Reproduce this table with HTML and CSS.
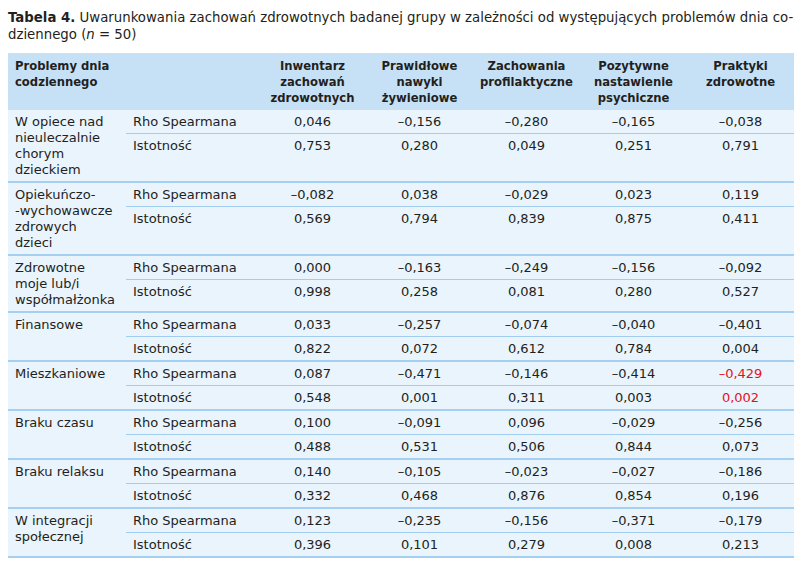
FILE: index.html
```html
<!DOCTYPE html>
<html lang="pl">
<head>
<meta charset="utf-8">
<title>Tabela 4</title>
<link rel="stylesheet" href="styles.css">
</head>
<body>
<div class="page">
  <p class="caption"><b>Tabela 4.</b> Uwarunkowania zachowań zdrowotnych badanej grupy w zależności od występujących problemów dnia co-<br>dziennego (<i>n</i> = 50)</p>
  <div class="table">
    <div class="head">
      <div class="h h-left">Problemy dnia<br>codziennego</div>
      <div class="h">Inwentarz<br>zachowań<br>zdrowotnych</div>
      <div class="h">Prawidłowe<br>nawyki<br>żywieniowe</div>
      <div class="h">Zachowania<br>profilaktyczne</div>
      <div class="h">Pozytywne<br>nastawienie<br>psychiczne</div>
      <div class="h">Praktyki<br>zdrowotne</div>
    </div>

    <div class="group">
      <div class="prob">W opiece nad<br>nieuleczalnie<br>chorym<br>dzieckiem</div>
      <div class="c stat r1">Rho Spearmana</div><div class="c r1">0,046</div><div class="c r1">–0,156</div><div class="c r1">–0,280</div><div class="c r1">–0,165</div><div class="c r1">–0,038</div>
      <div class="c stat">Istotność</div><div class="c">0,753</div><div class="c">0,280</div><div class="c">0,049</div><div class="c">0,251</div><div class="c">0,791</div>
    </div>

    <div class="group">
      <div class="prob">Opiekuńczo-<br>-wychowawcze<br>zdrowych<br>dzieci</div>
      <div class="c stat r1">Rho Spearmana</div><div class="c r1">–0,082</div><div class="c r1">0,038</div><div class="c r1">–0,029</div><div class="c r1">0,023</div><div class="c r1">0,119</div>
      <div class="c stat">Istotność</div><div class="c">0,569</div><div class="c">0,794</div><div class="c">0,839</div><div class="c">0,875</div><div class="c">0,411</div>
    </div>

    <div class="group">
      <div class="prob">Zdrowotne<br>moje lub/i<br>współmałżonka</div>
      <div class="c stat r1">Rho Spearmana</div><div class="c r1">0,000</div><div class="c r1">–0,163</div><div class="c r1">–0,249</div><div class="c r1">–0,156</div><div class="c r1">–0,092</div>
      <div class="c stat">Istotność</div><div class="c">0,998</div><div class="c">0,258</div><div class="c">0,081</div><div class="c">0,280</div><div class="c">0,527</div>
    </div>

    <div class="group">
      <div class="prob">Finansowe</div>
      <div class="c stat r1">Rho Spearmana</div><div class="c r1">0,033</div><div class="c r1">–0,257</div><div class="c r1">–0,074</div><div class="c r1">–0,040</div><div class="c r1">–0,401</div>
      <div class="c stat">Istotność</div><div class="c">0,822</div><div class="c">0,072</div><div class="c">0,612</div><div class="c">0,784</div><div class="c">0,004</div>
    </div>

    <div class="group">
      <div class="prob">Mieszkaniowe</div>
      <div class="c stat r1">Rho Spearmana</div><div class="c r1">0,087</div><div class="c r1">–0,471</div><div class="c r1">–0,146</div><div class="c r1">–0,414</div><div class="c r1 sig">–0,429</div>
      <div class="c stat">Istotność</div><div class="c">0,548</div><div class="c">0,001</div><div class="c">0,311</div><div class="c">0,003</div><div class="c sig">0,002</div>
    </div>

    <div class="group">
      <div class="prob">Braku czasu</div>
      <div class="c stat r1">Rho Spearmana</div><div class="c r1">0,100</div><div class="c r1">–0,091</div><div class="c r1">0,096</div><div class="c r1">–0,029</div><div class="c r1">–0,256</div>
      <div class="c stat">Istotność</div><div class="c">0,488</div><div class="c">0,531</div><div class="c">0,506</div><div class="c">0,844</div><div class="c">0,073</div>
    </div>

    <div class="group">
      <div class="prob">Braku relaksu</div>
      <div class="c stat r1">Rho Spearmana</div><div class="c r1">0,140</div><div class="c r1">–0,105</div><div class="c r1">–0,023</div><div class="c r1">–0,027</div><div class="c r1">–0,186</div>
      <div class="c stat">Istotność</div><div class="c">0,332</div><div class="c">0,468</div><div class="c">0,876</div><div class="c">0,854</div><div class="c">0,196</div>
    </div>

    <div class="group">
      <div class="prob">W integracji<br>społecznej</div>
      <div class="c stat r1">Rho Spearmana</div><div class="c r1">0,123</div><div class="c r1">–0,235</div><div class="c r1">–0,156</div><div class="c r1">–0,371</div><div class="c r1">–0,179</div>
      <div class="c stat">Istotność</div><div class="c">0,396</div><div class="c">0,101</div><div class="c">0,279</div><div class="c">0,008</div><div class="c">0,213</div>
    </div>
  </div>
</div>
</body>
</html>
```

FILE: styles.css
```css
html, body {
  margin: 0;
  padding: 0;
  background: #ffffff;
}

body {
  font-family: "DejaVu Sans", "Liberation Sans", sans-serif;
  color: #231f20;
}

.page {
  padding: 9px 6px 0 8px;
}

.caption {
  margin: 0 0 10px 0;
  font-size: 13.3px;
  line-height: 17px;
  white-space: nowrap;
}

.table {
  width: 786px;
  background: #eaf4fd;
}

.head,
.group {
  display: grid;
  grid-template-columns: 118px 133px repeat(5, 107px);
}

.head {
  background: #c6e1f6;
  font-size: 11.6px;
  line-height: 16px;
  font-weight: bold;
}

.h {
  text-align: center;
  padding: 5px 2px 4px 2px;
}

.h-left {
  grid-column: span 2;
  text-align: left;
  padding-left: 7px;
}

.group {
  grid-template-rows: 24px auto;
  border-bottom: 2px solid #a6d0f1;
  font-size: 13px;
  line-height: 16px;
}

.prob {
  grid-row: span 2;
  padding: 4px 4px 3px 7px;
}

.c {
  box-sizing: border-box;
  text-align: center;
  padding: 4px 2px 3px 2px;
}

.c.stat {
  text-align: left;
  padding-left: 7px;
}

.c.r1 {
  border-bottom: 1px solid #a3cdef;
}

.sig {
  color: #e2121a;
}
```
